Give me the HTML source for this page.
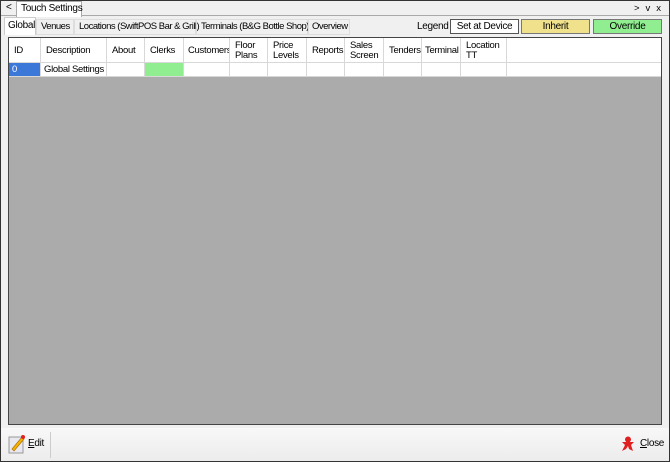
<!DOCTYPE html>
<html><head><style>
*{margin:0;padding:0;box-sizing:border-box}
body{width:670px;height:462px;background:#f0f0f0;font-family:"Liberation Sans",sans-serif;font-size:10px;letter-spacing:-0.3px;color:#000;position:relative;overflow:hidden;white-space:nowrap}
.a{position:absolute}
.frame{left:0;top:0;width:670px;height:462px;border:1px solid #333}
.hc{position:absolute;top:38px;height:25px;border-right:1px solid #d8d8d8;padding-left:5px;display:flex;align-items:center;line-height:10px;font-size:9.5px;overflow:hidden}
.dc{position:absolute;top:63px;height:14px;border-right:1px solid #d8d8d8;border-bottom:1px solid #d8d8d8;background:#fff;padding-left:3px;line-height:13px;font-size:9.5px;overflow:hidden}
.tab{position:absolute;top:0;height:16px;border:1px solid #ddd;line-height:14px;font-size:9.5px;letter-spacing:-0.5px}
</style></head><body>
<div class="a frame"></div>
<div class="a" style="left:1px;top:1px;width:668px;height:15px;background:#f0f0f0;border-bottom:1px solid #aaa"></div>
<div class="a" style="left:6px;top:2px">&lt;</div>
<div class="a" style="left:16px;top:1px;width:66px;height:16px;background:#fff;border:1px solid #aaa;border-bottom:none;padding-left:4px;line-height:14px">Touch Settings</div>
<div class="a" style="left:634px;top:3px;font-size:9.5px;letter-spacing:6px">&gt;vx</div>
<div class="a" style="left:4px;top:17px;width:32px;height:18px;background:#fff;border:1px solid #ccc;border-bottom:none;padding-left:3px;line-height:16px">Global</div>
<div class="a" style="left:36px;top:19px;width:400px;height:16px">
<span class="tab" style="left:0;width:38px;padding-left:4px">Venues</span>
<span class="tab" style="left:38px;width:122px;padding-left:4px">Locations (SwiftPOS Bar &amp; Grill)</span>
<span class="tab" style="left:160px;width:112px;padding-left:4px">Terminals (B&amp;G Bottle Shop)</span>
<span class="tab" style="left:272px;width:42px;padding-left:3px">Overview</span>
</div>
<div class="a" style="left:417px;top:21px">Legend</div>
<div class="a" style="left:450px;top:19px;width:69px;height:15px;background:#fff;border:1px solid #555;text-align:center;line-height:13px">Set at Device</div>
<div class="a" style="left:521px;top:19px;width:69px;height:15px;background:#f0e28c;border:1px solid #777;text-align:center;line-height:13px">Inherit</div>
<div class="a" style="left:593px;top:19px;width:69px;height:15px;background:#90ee90;border:1px solid #777;text-align:center;line-height:13px">Override</div>
<div class="a" style="left:8px;top:37px;width:654px;height:388px;background:#ababab;border:1px solid #444"></div>
<div class="a" style="left:9px;top:38px;width:652px;height:25px;background:#fff;border-bottom:1px solid #d8d8d8"></div>
<div class="hc" style="left:9px;width:32px">ID</div>
<div class="hc" style="left:41px;width:66px">Description</div>
<div class="hc" style="left:107px;width:38px">About</div>
<div class="hc" style="left:145px;width:39px">Clerks</div>
<div class="hc" style="left:184px;width:46px;padding-left:4px">Customers</div>
<div class="hc" style="left:230px;width:38px">Floor<br>Plans</div>
<div class="hc" style="left:268px;width:39px">Price<br>Levels</div>
<div class="hc" style="left:307px;width:38px">Reports</div>
<div class="hc" style="left:345px;width:39px">Sales<br>Screen</div>
<div class="hc" style="left:384px;width:38px">Tenders</div>
<div class="hc" style="left:422px;width:39px;padding-left:3px">Terminal</div>
<div class="hc" style="left:461px;width:46px">Location<br>TT</div>
<div class="dc" style="left:9px;width:32px;background:#3c78d8;color:#fff">0</div>
<div class="dc" style="left:41px;width:66px">Global Settings</div>
<div class="dc" style="left:107px;width:38px"></div>
<div class="dc" style="left:145px;width:39px;background:#90ee90"></div>
<div class="dc" style="left:184px;width:46px"></div>
<div class="dc" style="left:230px;width:38px"></div>
<div class="dc" style="left:268px;width:39px"></div>
<div class="dc" style="left:307px;width:38px"></div>
<div class="dc" style="left:345px;width:39px"></div>
<div class="dc" style="left:384px;width:38px"></div>
<div class="dc" style="left:422px;width:39px"></div>
<div class="dc" style="left:461px;width:46px"></div>
<div class="dc" style="left:507px;width:154px;border-right:none"></div>
<div class="a" style="left:1px;top:428px;width:668px;height:33px;background:linear-gradient(#f8f8f8,#ececec)"></div>
<svg class="a" style="left:8px;top:434px" width="18" height="20"><rect x="1" y="3" width="14" height="16" fill="#e8e8f0" stroke="#999"/><path d="M4 15 L14 3 L16 5 L6 17 Z" fill="#f5b400" stroke="#b07000" stroke-width=".7"/><circle cx="15" cy="3" r="2" fill="#d22"/></svg>
<div class="a" style="left:28px;top:438px"><u>E</u>dit</div>
<div class="a" style="left:50px;top:432px;width:1px;height:26px;background:#ccc"></div>
<svg class="a" style="left:620px;top:436px" width="16" height="16"><circle cx="8" cy="3.5" r="3" fill="#e02020"/><path d="M2 6 L14 6 L11 9 L13 15 L9 13 L8 10 L6 13 L2 15 L5 9 Z" fill="#e02020"/></svg>
<div class="a" style="left:640px;top:438px"><u>C</u>lose</div>
</body></html>
